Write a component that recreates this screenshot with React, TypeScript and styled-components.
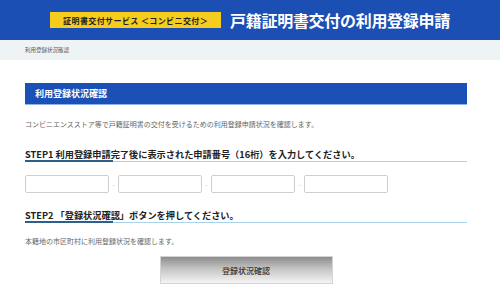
import React from "react";
import styled, { createGlobalStyle } from "styled-components";

const Global = createGlobalStyle`
  html, body { margin: 0; padding: 0; background: #fff; }
  body { font-family: "Noto Sans CJK JP", "Noto Sans", sans-serif; }
  * { box-sizing: border-box; }
`;

const Header = styled.header`
  height: 40px;
  background: #1c4fb4;
  display: flex;
  align-items: center;
  justify-content: center;
  gap: 9px;
`;

const Badge = styled.div`
  width: 171px;
  height: 16px;
  background: #f6cd1f;
  color: #222;
  font-size: 8px;
  font-weight: 700;
  display: flex;
  align-items: center;
  justify-content: center;
  letter-spacing: 0.4px;
`;

const Title = styled.h1`
  margin: 0;
  color: #fff;
  font-size: 16px;
  font-weight: 700;
  line-height: 18px;
  letter-spacing: -0.3px;
`;

const Breadcrumb = styled.div`
  height: 20px;
  background: #eef3f6;
  display: flex;
  align-items: center;
  padding-left: 25px;
  font-size: 5.5px;
  color: #555;
`;

const Main = styled.main`
  padding: 23px 33px 0 25px;
`;

const SectionBar = styled.div`
  height: 22px;
  background: #1b51b7;
  border-bottom: 1px solid #8fb6e6;
  color: #fff;
  font-size: 9px;
  font-weight: 700;
  display: flex;
  align-items: center;
  padding-left: 10px;
`;

const Text = styled.p<{ $mt: number }>`
  margin: ${(p) => p.$mt}px 0 0;
  font-size: 7px;
  line-height: 10px;
  color: #666;
`;

const StepHeading = styled.h2<{ $mt: number }>`
  position: relative;
  margin: ${(p) => p.$mt}px 0 0;
  font-size: 9.2px;
  font-weight: 700;
  line-height: 12px;
  color: #222;
  padding-bottom: 1px;
  border-bottom: 1px solid #a9d3ea;
  &::after {
    content: "";
    position: absolute;
    left: 0;
    bottom: -1px;
    width: 88px;
    height: 2px;
    background: #2b6089;
  }
`;

const InputRow = styled.div`
  margin-top: 13px;
  display: flex;
  align-items: center;
`;

const Field = styled.input`
  width: 84px;
  height: 18px;
  border: 1px solid #cfcfcf;
  border-radius: 2px;
  background: #fff;
  padding: 0 3px;
  font-size: 8px;
  outline: none;
`;

const Sep = styled.span`
  width: 9px;
  text-align: center;
  font-size: 6px;
  color: #aaa;
`;

const ButtonWrap = styled.div`
  margin-top: 10px;
  display: flex;
  justify-content: center;
`;

const Button = styled.button`
  width: 173px;
  height: 28px;
  border: 1px solid #d4d4d4;
  background: linear-gradient(to bottom, #8d8d8d 0%, #c4c4c4 45%, #f4f4f4 100%);
  color: #333;
  font-family: inherit;
  font-size: 8px;
  font-weight: 500;
  padding: 0;
`;

export default function App() {
  const parts = [0, 1, 2, 3];
  return (
    <>
      <Global />
      <Header>
        <Badge>証明書交付サービス ＜コンビニ交付＞</Badge>
        <Title>戸籍証明書交付の利用登録申請</Title>
      </Header>
      <Breadcrumb>利用登録状況確認</Breadcrumb>
      <Main>
        <SectionBar>利用登録状況確認</SectionBar>
        <Text $mt={14}>
          コンビニエンスストア等で戸籍証明書の交付を受けるための利用登録申請状況を確認します。
        </Text>
        <StepHeading $mt={19}>
          STEP1 利用登録申請完了後に表示された申請番号（16桁）を入力してください。
        </StepHeading>
        <InputRow>
          {parts.map((i) => (
            <React.Fragment key={i}>
              {i > 0 && <Sep>-</Sep>}
              <Field type="text" maxLength={4} />
            </React.Fragment>
          ))}
        </InputRow>
        <StepHeading $mt={16}>STEP2 「登録状況確認」ボタンを押してください。</StepHeading>
        <Text $mt={13}>本籍地の市区町村に利用登録状況を確認します。</Text>
        <ButtonWrap>
          <Button type="button">登録状況確認</Button>
        </ButtonWrap>
      </Main>
    </>
  );
}
